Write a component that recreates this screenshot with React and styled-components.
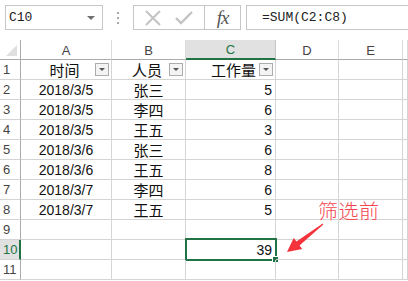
import React from 'react';
import styled, { createGlobalStyle } from 'styled-components';

const GREEN = '#217346';
const GRID = '#d4d4d4';

const GlobalStyle = createGlobalStyle`
  html, body {
    margin: 0;
    padding: 0;
    background: #ffffff;
    overflow: hidden;
  }
  body {
    font-family: 'Liberation Sans', Arial, sans-serif;
  }
`;

const Page = styled.div`
  width: 408px;
  height: 281px;
  position: relative;
  overflow: hidden;
  background: #fff;
`;

const FormulaBar = styled.div`
  display: flex;
  align-items: flex-start;
  height: 40px;
  box-sizing: border-box;
  padding: 5px 0 0 5px;
`;

const NameBox = styled.div`
  width: 98px;
  height: 25px;
  box-sizing: border-box;
  border: 1px solid #c6c6c6;
  display: flex;
  align-items: center;
  justify-content: space-between;
  padding: 0 7px 0 3px;
  font-family: 'Liberation Mono', monospace;
  font-size: 13px;
  color: #222;
`;

const DropTri = styled.span`
  width: 0;
  height: 0;
  border-left: 4px solid transparent;
  border-right: 4px solid transparent;
  border-top: 4px solid #707070;
  margin-top: 1px;
`;

const Grip = styled.div`
  width: 30px;
  height: 25px;
  display: flex;
  flex-direction: column;
  align-items: center;
  justify-content: center;
  gap: 3px;
  span {
    width: 2px;
    height: 2px;
    background: #a8a8a8;
  }
`;

const ButtonBox = styled.div`
  width: 72px;
  height: 25px;
  box-sizing: border-box;
  border: 1px solid #c6c6c6;
  display: flex;
  align-items: center;
  justify-content: space-around;
  padding: 0 4px;
`;

const FxBox = styled.div`
  width: 36px;
  height: 25px;
  box-sizing: border-box;
  border: 1px solid #c6c6c6;
  border-left: none;
  display: flex;
  align-items: center;
  justify-content: center;
  font-family: 'Liberation Serif', 'Times New Roman', serif;
  font-style: italic;
  font-size: 19px;
  color: #555;
  letter-spacing: -1px;
`;

const FormulaInput = styled.div`
  flex: 1;
  margin-left: 5px;
  margin-right: -2px;
  height: 25px;
  box-sizing: border-box;
  border: 1px solid #c6c6c6;
  display: flex;
  align-items: center;
  padding-left: 15px;
  font-family: 'Liberation Mono', monospace;
  font-size: 13px;
  color: #222;
`;

const Sheet = styled.div`
  display: grid;
  grid-template-columns: 21px 91px 74px 90px 63px 64px 1fr;
  grid-auto-rows: 20px;
`;

const Cell = styled.div`
  position: relative;
  box-sizing: border-box;
  border-right: 1px solid ${GRID};
  border-bottom: 1px solid ${GRID};
  display: flex;
  align-items: center;
  justify-content: ${(p) => p.$align || 'center'};
  padding: ${(p) => (p.$align === 'flex-end' ? '0 3px 0 0' : '0')};
  font-family: ${(p) =>
    p.$cjk
      ? "'Noto Sans CJK SC', 'Noto Sans', sans-serif"
      : "'Liberation Sans', Arial, sans-serif"};
  font-size: ${(p) => (p.$cjk ? '15px' : '14px')};
  color: #111;
  white-space: nowrap;
`;

const ColHead = styled.div`
  box-sizing: border-box;
  border-right: 1px solid ${(p) => (p.$active ? '#c6c6c6' : '#dadada')};
  border-bottom: ${(p) => (p.$active ? `2px solid ${GREEN}` : '1px solid #ababab')};
  background: ${(p) => (p.$active ? '#e1e1e1' : '#fff')};
  color: ${(p) => (p.$active ? GREEN : '#444')};
  display: flex;
  align-items: center;
  justify-content: center;
  font-size: 13px;
  padding-top: 1px;
`;

const Corner = styled.div`
  box-sizing: border-box;
  border-right: 1px solid #ababab;
  border-bottom: 1px solid #ababab;
  display: flex;
  align-items: flex-end;
  justify-content: flex-end;
  padding: 0 3px 3px 0;
  &::after {
    content: '';
    width: 0;
    height: 0;
    border-left: 11px solid transparent;
    border-bottom: 11px solid #dfdfdf;
  }
`;

const RowHead = styled.div`
  box-sizing: border-box;
  border-right: ${(p) => (p.$active ? `2px solid ${GREEN}` : '1px solid #ababab')};
  border-bottom: 1px solid ${GRID};
  background: ${(p) => (p.$active ? '#e1e1e1' : '#fff')};
  color: ${(p) => (p.$active ? GREEN : '#444')};
  display: flex;
  align-items: center;
  padding-left: 3px;
  font-size: 13px;
`;

const HeaderCell = styled(Cell)`
  padding: 0 2px 0 0;
  gap: 3px;
`;

const HeaderLabel = styled.span`
  flex: 1;
  text-align: ${(p) => p.$textAlign || 'center'};
  padding-left: ${(p) => (p.$textAlign === 'right' ? '0' : '16px')};
`;

const FilterButton = styled.span`
  width: 14px;
  height: 13px;
  box-sizing: border-box;
  border: 1px solid #acacac;
  background: #f4f4f4;
  display: flex;
  align-items: center;
  justify-content: center;
  &::after {
    content: '';
    width: 0;
    height: 0;
    border-left: 3px solid transparent;
    border-right: 3px solid transparent;
    border-top: 3px solid #555;
  }
`;

const Selection = styled.div`
  position: absolute;
  top: -2px;
  left: -1px;
  right: -2px;
  bottom: -2px;
  border: 2px solid ${GREEN};
  pointer-events: none;
`;

const FillHandle = styled.span`
  position: absolute;
  right: -4px;
  bottom: -4px;
  width: 5px;
  height: 5px;
  background: ${GREEN};
  border: 1px solid #fff;
`;

const Note = styled.div`
  position: absolute;
  left: 318px;
  top: 196px;
  font-family: 'Noto Sans CJK SC', sans-serif;
  font-size: 20px;
  font-weight: 300;
  color: #f4464f;
  letter-spacing: 0.5px;
`;

const Arrow = styled.svg`
  position: absolute;
  left: 0;
  top: 0;
  pointer-events: none;
`;

const rows = [
  ['2018/3/5', '张三', 5],
  ['2018/3/5', '李四', 6],
  ['2018/3/5', '王五', 3],
  ['2018/3/6', '张三', 6],
  ['2018/3/6', '王五', 8],
  ['2018/3/7', '李四', 6],
  ['2018/3/7', '王五', 5],
];

const columns = ['A', 'B', 'C', 'D', 'E', ''];

const CancelIcon = () => (
  <svg width="16" height="16" viewBox="0 0 16 16">
    <path d="M1 1 L15 15 M15 1 L1 15" stroke="#c3c3c3" strokeWidth="2" fill="none" />
  </svg>
);

const EnterIcon = () => (
  <svg width="18" height="14" viewBox="0 0 18 14">
    <path d="M1 7 L6 12 L17 1" stroke="#c3c3c3" strokeWidth="2.4" fill="none" />
  </svg>
);

const App = () => {
  return (
    <Page>
      <GlobalStyle />
      <FormulaBar>
        <NameBox>
          C10
          <DropTri />
        </NameBox>
        <Grip>
          <span />
          <span />
          <span />
        </Grip>
        <ButtonBox>
          <CancelIcon />
          <EnterIcon />
        </ButtonBox>
        <FxBox>fx</FxBox>
        <FormulaInput>=SUM(C2:C8)</FormulaInput>
      </FormulaBar>

      <Sheet>
        <Corner />
        {columns.map((c) => (
          <ColHead key={c || 'F'} $active={c === 'C'}>
            {c}
          </ColHead>
        ))}

        <RowHead>1</RowHead>
        <HeaderCell $cjk>
          <HeaderLabel>时间</HeaderLabel>
          <FilterButton />
        </HeaderCell>
        <HeaderCell $cjk>
          <HeaderLabel>人员</HeaderLabel>
          <FilterButton />
        </HeaderCell>
        <HeaderCell $cjk>
          <HeaderLabel $textAlign="right">工作量</HeaderLabel>
          <FilterButton />
        </HeaderCell>
        <Cell />
        <Cell />
        <Cell />

        {rows.map(([date, name, n], i) => (
          <React.Fragment key={i}>
            <RowHead>{i + 2}</RowHead>
            <Cell>{date}</Cell>
            <Cell $cjk>{name}</Cell>
            <Cell $align="flex-end">{n}</Cell>
            <Cell />
            <Cell />
            <Cell />
          </React.Fragment>
        ))}

        <RowHead>9</RowHead>
        <Cell />
        <Cell />
        <Cell />
        <Cell />
        <Cell />
        <Cell />

        <RowHead $active>10</RowHead>
        <Cell />
        <Cell />
        <Cell $align="flex-end">
          39
          <Selection>
            <FillHandle />
          </Selection>
        </Cell>
        <Cell />
        <Cell />
        <Cell />

        <RowHead>11</RowHead>
        <Cell />
        <Cell />
        <Cell />
        <Cell />
        <Cell />
        <Cell />
      </Sheet>

      <Note>筛选前</Note>
      <Arrow width="408" height="281" viewBox="0 0 408 281">
        <polygon
          points="322.7,223.6 296.5,241.4 293.7,237.9 287,252 302.3,248.9 299.5,245.4 323.3,224.4"
          fill="#f4333c"
        />
      </Arrow>
    </Page>
  );
};

export default App;
